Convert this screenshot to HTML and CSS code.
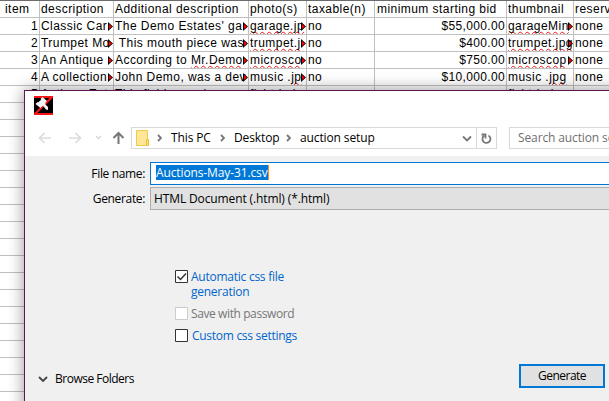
FILE: index.html
```
<!DOCTYPE html>
<html lang="en">
<head>
<meta charset="utf-8">
<title>Auction setup</title>
<link rel="stylesheet" href="styles.css">
</head>
<body>
<main class="screen">
<table class="sheet">
<colgroup><col class="c1"><col class="c2"><col class="c3"><col class="c4"><col class="c5"><col class="c6"><col class="c7"><col class="c8"></colgroup>
<tbody>
<tr class="head"><td>item</td><td>description</td><td>Additional description</td><td>photo(s)</td><td>taxable(n)</td><td>minimum starting bid</td><td>thumbnail</td><td>reserv</td></tr>
<tr><td class="num">1</td><td class="cut">Classic Car</td><td class="cut">The Demo Estates' ga</td><td class="cut"><u>garage.jp</u></td><td>no</td><td class="num">$55,000.00</td><td class="cut"><u>garageMin</u></td><td>none</td></tr>
<tr><td class="num">2</td><td class="cut">Trumpet Mo</td><td class="cut">&nbsp;This mouth piece was</td><td class="cut"><u>trumpet.j</u></td><td>no</td><td class="num">$400.00</td><td class="cut"><u>trumpet.jpg</u></td><td>none</td></tr>
<tr><td class="num">3</td><td class="cut">An Antique</td><td class="cut">According to <u>Mr.Demo</u></td><td class="cut"><u>microsco</u></td><td>no</td><td class="num">$750.00</td><td class="cut"><u>microscop</u></td><td>none</td></tr>
<tr><td class="num">4</td><td class="cut">A collection</td><td class="cut">John Demo, was a dev</td><td class="cut">music .<u>jp</u></td><td>no</td><td class="num">$10,000.00</td><td>music .<u>jpg</u></td><td>none</td></tr>
<tr><td class="num">5</td><td>Antique Ent</td><td>This fishing reel was w</td><td>fishtrip.j</td><td></td><td></td><td>fishtrip.jpg</td><td></td></tr>
</tbody>
</table>
<div class="lines"></div>
<section class="dialog">
<header class="top">
<svg class="logo" width="19" height="19" viewBox="0 0 19 19"><path fill="#000" d="M0 0h19v19H0z"/><path d="M18 1L1 18" stroke="#f81414" stroke-width="2.200"/><path d="M0 1h19M0 18h19" stroke="#f81414" stroke-width="2"/><path d="M1.500 8l2-2 5 4-2 2zM6.500 3l2-2 4.500 4-2 2zM4 6.500l4-3.500 4 4-4 3.500zM8.500 9l2-1.500L14 11v3l-2-.5z" fill="#f4f4f4"/></svg>
<nav class="nav">
<svg class="arrows" width="93" height="22" viewBox="0 0 93 22" fill="none"><g stroke="#dcdcdc" stroke-width="1.7"><path d="M13 11H1.500M6.500 6l-5 5 5 5M31 11h11.500M37.500 6l5 5-5 5"/><path d="M58 9l2.500 2.500L63 9"/></g><path d="M80.500 17V6M75.500 11l5-5 5 5" stroke="#777" stroke-width="2"/></svg>
<div class="address">
<svg class="folder" width="14" height="18" viewBox="0 0 14 18"><path d="M.5 1.500h11v15H.5z" fill="#ffe699" stroke="#efca4c"/><path d="M10.500 10.500h2v6h-2z" fill="#ffe07a" stroke="#e8be38"/></svg>
<svg class="sep" width="5" height="8" viewBox="0 0 5 8"><path d="M1 1l3 3-3 3"/></svg><span class="pc">This PC</span>
<svg class="sep" width="5" height="8" viewBox="0 0 5 8"><path d="M1 1l3 3-3 3"/></svg><span class="desk">Desktop</span>
<svg class="sep" width="5" height="8" viewBox="0 0 5 8"><path d="M1 1l3 3-3 3"/></svg><span>auction setup</span>
<svg class="drop" width="10" height="7" viewBox="0 0 10 7"><path d="M1 1.500l4 4 4-4"/></svg>
<span class="refresh"><svg width="11" height="13" viewBox="0 0 11 13"><path d="M7.500 3.500a4 4 0 1 1-4.500.3M.5 2.500h4v4"/></svg></span>
</div>
<div class="search">Search auction se</div>
</nav>
</header>
<div class="fields">
<label class="name">File name:</label><div class="input"><span class="selected">Auctions-May-31.csv</span></div>
<label class="type">Generate:</label><div class="select">HTML Document (.html) (*.html)</div>
</div>
<div class="options">
<div class="opt auto"><svg class="box" width="13" height="13" viewBox="0 0 13 13"><path d="M.5.5h12v12H.5z"/><path d="M2.500 6.500l3 3 5.500-6"/></svg><span>Automatic css file<br>generation</span></div>
<div class="opt off"><svg class="box" width="13" height="13" viewBox="0 0 13 13"><path d="M.5.5h12v12H.5z"/></svg><span>Save with password</span></div>
<div class="opt custom"><svg class="box" width="13" height="13" viewBox="0 0 13 13"><path d="M.5.5h12v12H.5z"/></svg><span>Custom css settings</span></div>
</div>
<footer class="foot">
<div class="browse"><svg class="chev" width="10" height="7" viewBox="0 0 10 7"><path d="M1 1l4 4 4-4"/></svg><span>Browse Folders</span></div>
<button class="generate">Generate</button>
</footer>
</section>
</main>
</body>
</html>
```
FILE: styles.css
```
*{box-sizing:border-box}
body{margin:0;overflow:hidden;background:#fff}
.screen{position:relative;width:609px;height:401px;overflow:hidden;border-top:1px solid #6b6b6b}
.sheet{table-layout:fixed;width:684px;border-collapse:separate;border-spacing:0;font:12px/16px "Liberation Sans",sans-serif;letter-spacing:.45px;color:#000}
.c1{width:40px}.c2{width:74px}.c3{width:135px}.c4{width:58px}.c5{width:68px}.c6{width:132px}.c7{width:67px}.c8{width:110px}
.sheet td{position:relative;height:17px;padding:0 0 0 1px;border-right:1px solid #c0c0c0;border-bottom:1px solid #c0c0c0;white-space:nowrap;overflow:hidden}
.sheet .num{text-align:right;padding-right:1px;letter-spacing:.35px}
.sheet .head td:nth-child(1){padding-left:5px}
.sheet .head td:nth-child(6){padding-left:2px}
.sheet u{text-decoration:underline wavy #e11 1px;text-underline-offset:1px;text-decoration-skip-ink:none}
.cut::before,.cut::after{content:"";position:absolute;clip-path:polygon(0 0,100% 50%,0 100%)}
.cut::before{right:0;top:4px;width:5px;height:9px;background:#000}
.cut::after{right:1px;top:6px;width:3px;height:5px;background:#f00}
.lines{height:306px;width:26px;background:repeating-linear-gradient(#fff 0 16px,#c0c0c0 16px 17px)}
.dialog{position:absolute;left:24px;top:89px;width:700px;height:340px;background:#f0f0f0;border:1px solid #5c1854;box-shadow:0 0 15px rgba(0,0,0,.42);font:12px/16px "Open Sans",sans-serif;letter-spacing:-.12px;color:#000}
.top{height:65px;background:#fff;padding:5px 0 0 9px}
.logo{display:block}
.nav{display:flex;align-items:center;margin-top:12px;padding-left:4px}
.arrows{flex:none}
.address{display:flex;align-items:center;width:366px;height:22px;border:1px solid #d9d9d9;padding-left:4px;flex:none}
.folder{margin-right:7px}
.sep{margin-right:9px;flex:none}
.address path{stroke-width:1.6}
.folder path{stroke-width:1}
.sep path,.drop path,.refresh path,.chev path{fill:none;stroke:#777;stroke-width:1.8}
.pc{width:49px}.desk{width:52px}
.address span{white-space:nowrap}
.drop{margin-left:auto;margin-right:4px}
.refresh{display:flex;align-items:center;justify-content:center;height:20px;width:20px;border-left:1px solid #d9d9d9}
.refresh svg{transform:scaleY(1)}
.search{margin-left:12px;width:190px;height:22px;border:1px solid #d9d9d9;padding:2px 8px;color:#707070;white-space:nowrap}
.fields{display:grid;grid-template-columns:125px 1fr;grid-template-rows:23px 23px;row-gap:2px;padding-top:6px}
.fields label{line-height:24px;text-align:right;padding-right:5px;letter-spacing:-.35px}
.input{background:#fff;border:1px solid #0078d7;padding:2px 5px}
.selected{display:inline-block;height:15px;line-height:15px;background:#0078d7;color:#fff;border-right:1px solid #ff8728}
.select{background:#e1e1e1;border:1px solid #adadad;padding:3px 3px}
.options{padding:59px 0 0 150px;color:#0066cc;letter-spacing:-.25px}
.opt{display:flex;gap:3px;line-height:15px}
.box{flex:none;margin-top:1px}
.box path{fill:#fff;stroke:#333}
.box path+path{fill:none;stroke-width:1.5}
.off{color:#767676;margin-top:7px}.off span{letter-spacing:-.4px}.off .box path{stroke:#ccc}
.custom{margin-top:7px}
.custom span{padding-left:1px;letter-spacing:-.28px}
.foot{display:flex;justify-content:space-between;width:580px;padding-top:21px}
.browse{display:flex;align-items:center;gap:7px;height:30px;padding-left:13px;letter-spacing:-.5px}
.chev path{stroke:#444}
.generate{width:86px;height:24px;padding:0;border:2px solid #0078d7;background:#e1e1e1;font:12px/18px "Open Sans",sans-serif;letter-spacing:-.5px;color:#000}
```
